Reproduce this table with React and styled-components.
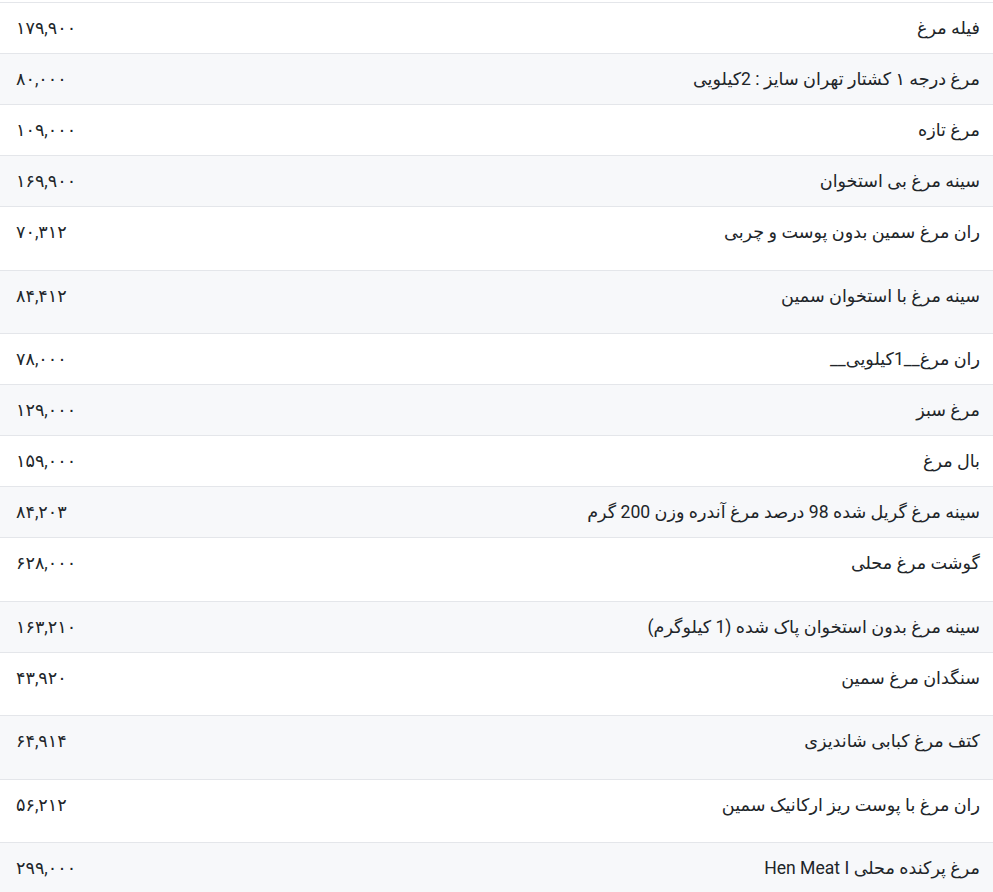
import React from "react";
import styled, { createGlobalStyle } from "styled-components";

const GlobalStyle = createGlobalStyle`
  body {
    margin: 0;
    background: #fff;
    font-family: "Roboto", "DejaVu Sans", sans-serif;
    color: #212529;
  }
`;

const prices = [
  { name: "فیله مرغ", price: "۱۷۹,۹۰۰" },
  { name: "مرغ درجه ۱ کشتار تهران سایز : 2کیلویی", price: "۸۰,۰۰۰" },
  { name: "مرغ تازه", price: "۱۰۹,۰۰۰" },
  { name: "سینه مرغ بی استخوان", price: "۱۶۹,۹۰۰" },
  { name: "ران مرغ سمین بدون پوست و چربی", price: "۷۰,۳۱۲", tall: true },
  { name: "سینه مرغ با استخوان سمین", price: "۸۴,۴۱۲", tall: true },
  { name: "ران مرغ__1کیلویی__", price: "۷۸,۰۰۰" },
  { name: "مرغ سبز", price: "۱۲۹,۰۰۰" },
  { name: "بال مرغ", price: "۱۵۹,۰۰۰" },
  { name: "سینه مرغ گریل شده 98 درصد مرغ آندره وزن 200 گرم", price: "۸۴,۲۰۳" },
  { name: "گوشت مرغ محلی", price: "۶۲۸,۰۰۰", tall: true },
  { name: "سینه مرغ بدون استخوان پاک شده (1 کیلوگرم)", price: "۱۶۳,۲۱۰" },
  { name: "سنگدان مرغ سمین", price: "۴۳,۹۲۰", tall: true },
  { name: "کتف مرغ کبابی شاندیزی", price: "۶۴,۹۱۴", tall: true },
  { name: "ران مرغ با پوست ریز ارکانیک سمین", price: "۵۶,۲۱۲", tall: true },
  { name: "مرغ پرکنده محلی Hen Meat I", price: "۲۹۹,۰۰۰" },
];

const App = () => {
  return (
    <>
      <GlobalStyle />
      <PriceTable dir="rtl">
        <tbody>
          {prices.map((item, i) => (
            <Row key={i}>
              <NameCell $tall={item.tall}>{item.name}</NameCell>
              <PriceCell $tall={item.tall}>{item.price}</PriceCell>
            </Row>
          ))}
        </tbody>
      </PriceTable>
    </>
  );
};

const PriceTable = styled.table`
  width: 100%;
  margin-top: 2px;
  border-collapse: collapse;
  font-size: 17.6px;
  line-height: 24px;
`;

const Row = styled.tr`
  border-top: 1px solid #e4e6ea;
  &:nth-child(even) {
    background: #f7f8fa;
  }
`;

const cell = `
  vertical-align: top;
  padding-top: 13px;
`;

const NameCell = styled.td`
  ${cell}
  padding-right: 13px;
  padding-bottom: ${(p) => (p.$tall ? "25.5px" : "13px")};
  text-align: right;
`;

const PriceCell = styled.td`
  ${cell}
  width: 160px;
  padding-left: 16px;
  padding-bottom: ${(p) => (p.$tall ? "25.5px" : "13px")};
  direction: ltr;
  text-align: left;
`;

export default App;
